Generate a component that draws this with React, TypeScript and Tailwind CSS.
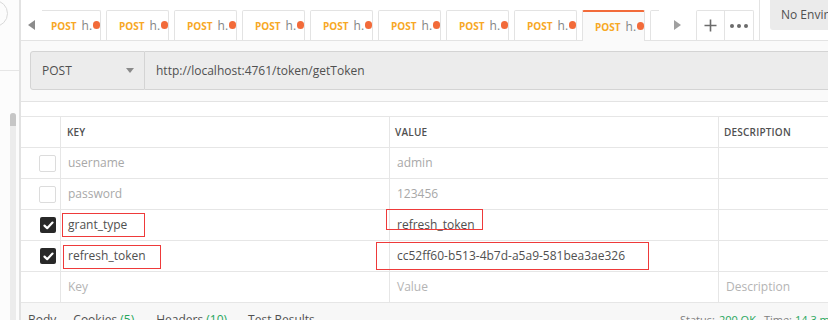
const tabs = Array.from({ length: 10 }, (_, i) => i)

function Tab({ active, first }: { active?: boolean; first?: boolean }) {
  return (
    <div
      className={
        'relative shrink-0 flex items-center w-[63px] border border-b-0 border-[#e3e3e3] rounded-t-[2px] pl-[12px] ' +
        (active ? 'h-[31px] -mb-px bg-[#fafafa] border-t-2 border-t-[#f26b3a] z-10' : 'h-[30px] bg-white') +
        (first ? ' -ml-[4px]' : '')
      }
    >
      <span className="text-[10px] font-bold text-[#f7a825] leading-none">POST</span>
      <span className="ml-[5px] text-[12px] text-[#858585] leading-none">h.</span>
      <span className="ml-[1px] -mt-[2px] w-[8px] h-[8px] rounded-full bg-[#f26b3a]" />
    </div>
  )
}

type Row = { key: string; value: string; on: boolean }

const rows: Row[] = [
  { key: 'username', value: 'admin', on: false },
  { key: 'password', value: '123456', on: false },
  { key: 'grant_type', value: 'refresh_token', on: true },
  { key: 'refresh_token', value: 'cc52ff60-b513-4b7d-a5a9-581bea3ae326', on: true },
]

// red markup boxes drawn over the screenshot, [key box, value box]
const marks: Record<string, [string, string]> = {
  grant_type: ['left-[1px] top-[3px] w-[83px] h-[24px]', '-left-[4px] -top-[1px] w-[97px] h-[21px]'],
  refresh_token: ['left-[2px] top-[4px] w-[98px] h-[24px]', '-left-[14px] top-[1px] w-[273px] h-[28px]'],
}

function Checkbox({ on }: { on: boolean }) {
  if (on) {
    return (
      <div className="w-[16px] h-[16px] ml-[1px] rounded-[2px] bg-[#282828] flex items-center justify-center">
        <svg width="11" height="9" viewBox="0 0 11 9">
          <path d="M1.5 4.6 L4.2 7.2 L9.5 1.6" fill="none" stroke="white" strokeWidth="2.2" strokeLinecap="round" strokeLinejoin="round" />
        </svg>
      </div>
    )
  }
  return <div className="w-[17px] h-[17px] rounded-[2px] border border-[#dcdcdc] bg-white" />
}

export default function App() {
  return (
    <div className="w-[828px] h-[320px] overflow-hidden flex bg-white font-['Open_Sans',sans-serif] text-[#505050]">
      {/* sidebar edge */}
      <div className="w-[21px] shrink-0 flex flex-col border-r-2 border-[#e2e2e2] overflow-hidden bg-[#fcfcfc]">
        <div className="h-[71px] border-b border-[#e6e6e6]">
          <div className="w-[27px] h-[27px] -ml-[19px] rounded-full border border-[#d9d9d9]" />
        </div>
        <div className="flex-1 pt-[42px] pl-[10px]">
          <div className="w-[6px] h-full rounded-t-[3px] bg-[#ececec]">
            <div className="h-[13px] rounded-t-[3px] bg-[#c6c6c6]" />
          </div>
        </div>
      </div>

      <div className="w-[807px] shrink-0 flex flex-col overflow-hidden">
        {/* tab bar */}
        <div className="h-[41px] shrink-0 flex items-end border-b border-[#e3e3e3] bg-white">
          <div className="w-[21px] h-[30px] shrink-0 flex items-center justify-center">
            <svg width="7" height="10" viewBox="0 0 7 10"><path d="M7 0 L0 5 L7 10 Z" fill="#8c8c8c" /></svg>
          </div>
          <div className="w-[617px] shrink-0 flex gap-[5px] overflow-x-clip">
            {tabs.map((i) => (
              <Tab key={i} first={i === 0} active={i === 8} />
            ))}
          </div>
          <div className="w-[37px] h-[30px] shrink-0 flex items-center justify-center">
            <svg width="7" height="10" viewBox="0 0 7 10"><path d="M0 0 L7 5 L0 10 Z" fill="#a0a0a0" /></svg>
          </div>
          <div className="w-[29px] h-[30px] shrink-0 border border-b-0 border-[#e3e3e3] rounded-tl-[2px] flex items-center justify-center">
            <svg width="13" height="13" viewBox="0 0 13 13">
              <path d="M6.5 0.5 V12.5 M0.5 6.5 H12.5" stroke="#6b6b6b" strokeWidth="1.6" />
            </svg>
          </div>
          <div className="w-[29px] h-[30px] shrink-0 border border-l-0 border-b-0 border-[#e3e3e3] rounded-tr-[2px] flex items-center justify-center gap-[3px]">
            <span className="w-[4px] h-[4px] rounded-full bg-[#6b6b6b]" />
            <span className="w-[4px] h-[4px] rounded-full bg-[#6b6b6b]" />
            <span className="w-[4px] h-[4px] rounded-full bg-[#6b6b6b]" />
          </div>
          <div className="ml-[5px] w-px h-[40px] shrink-0 self-start bg-[#e3e3e3]" />
          <div className="ml-[10px] self-start shrink-0 h-[30px] w-[140px] rounded-b-[3px] bg-[#ebebeb] flex items-center pl-[11px] text-[12px] whitespace-nowrap">
            No Environment
          </div>
        </div>

        {/* request url bar */}
        <div className="shrink-0 bg-[#fafafa] pt-[10px] pb-[11px] pl-[9px] border-b border-[#e3e3e3] flex">
          <div className="w-[115px] h-[39px] shrink-0 flex items-center justify-between bg-[#ececec] border border-[#d4d4d4] rounded-l-[3px] pl-[11px] pr-[10px] text-[12px]">
            <span>POST</span>
            <svg width="8" height="5" viewBox="0 0 8 5"><path d="M0 0 H8 L4 5 Z" fill="#8a8a8a" /></svg>
          </div>
          <div className="w-[760px] h-[39px] shrink-0 flex items-center bg-[#ececec] border border-l-0 border-[#d4d4d4] pl-[11px] text-[12px]">
            http://localhost:4761/token/getToken
          </div>
        </div>

        <div className="h-[14px] shrink-0" />

        {/* params table */}
        <div className="shrink-0 border-t border-[#e6e6e6]">
          <div className="flex h-[31px] border-b border-[#e6e6e6] text-[10px] font-semibold tracking-[0.2px]">
            <div className="w-[40px] shrink-0 border-r border-[#e6e6e6]" />
            <div className="w-[329px] shrink-0 border-r border-[#e6e6e6] flex items-center pl-[6px]">KEY</div>
            <div className="w-[329px] shrink-0 border-r border-[#e6e6e6] flex items-center pl-[5px]">VALUE</div>
            <div className="flex-1 flex items-center pl-[5px]">DESCRIPTION</div>
          </div>
          {rows.map((r) => (
            <div key={r.key} className={'flex h-[31px] border-b border-[#e6e6e6] text-[12px] ' + (r.on ? 'text-[#505050]' : 'text-[#a8a8a8]')}>
              <div className="w-[40px] shrink-0 border-r border-[#e6e6e6] flex items-center pl-[18px]">
                <Checkbox on={r.on} />
              </div>
              <div className="relative w-[329px] shrink-0 border-r border-[#e6e6e6] flex items-center pl-[7px]">
                {r.key}
                {marks[r.key] && <div className={'absolute border border-[#ee3a3a] ' + marks[r.key][0]} />}
              </div>
              <div className="relative w-[329px] shrink-0 border-r border-[#e6e6e6] flex items-center pl-[7px]">
                {r.value}
                {marks[r.key] && <div className={'absolute z-10 border border-[#ee3a3a] ' + marks[r.key][1]} />}
              </div>
              <div className="flex-1" />
            </div>
          ))}
          <div className="flex h-[31px] border-b border-[#e6e6e6] text-[12px] text-[#b4b4b4]">
            <div className="w-[40px] shrink-0 border-r border-[#e6e6e6]" />
            <div className="w-[329px] shrink-0 border-r border-[#e6e6e6] flex items-center pl-[7px]">Key</div>
            <div className="w-[329px] shrink-0 border-r border-[#e6e6e6] flex items-center pl-[7px]">Value</div>
            <div className="flex-1 flex items-center pl-[7px]">Description</div>
          </div>
        </div>

        {/* response tabs */}
        <div className="flex-1 bg-[#f7f7f7] flex pt-[9px] text-[12px] leading-[16px] whitespace-nowrap">
          <div className="w-[659px] shrink-0 flex pl-[7px]">
            <span>Body</span>
            <span className="ml-[17px]">Cookies <span className="text-[#26a65b]">(5)</span></span>
            <span className="ml-[22px]">Headers <span className="text-[#26a65b]">(10)</span></span>
            <span className="ml-[21px]">Test Results</span>
          </div>
          <div className="flex shrink-0 text-[11px]">
            <span className="text-[#808080]">Status:</span>
            <span className="ml-[4px] text-[#26a65b]">200 OK</span>
            <span className="ml-[8px] text-[#808080]">Time:</span>
            <span className="ml-[3px] text-[#26a65b]">14.3 ms</span>
          </div>
        </div>
      </div>
    </div>
  )
}
